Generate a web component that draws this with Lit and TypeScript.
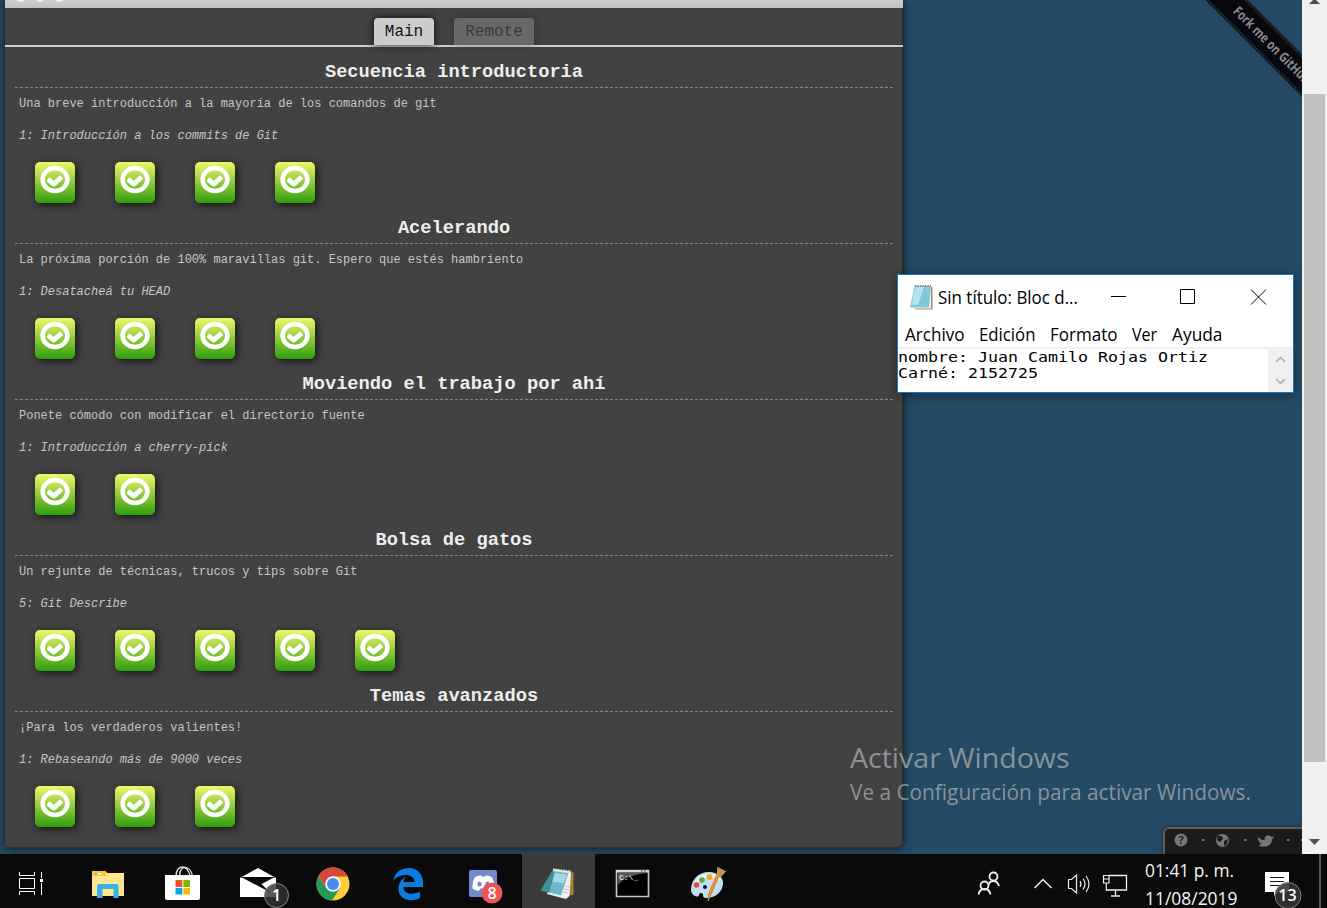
import { LitElement, html, svg, css } from "lit";
import { customElement } from "lit/decorators.js";

interface Sequence { title: string; about: string; level: string; count: number; }

const SEQUENCES: Sequence[] = [
  { title: "Secuencia introductoria", about: "Una breve introducción a la mayoría de los comandos de git", level: "1: Introducción a los commits de Git", count: 4 },
  { title: "Acelerando", about: "La próxima porción de 100% maravillas git. Espero que estés hambriento", level: "1: Desatacheá tu HEAD", count: 4 },
  { title: "Moviendo el trabajo por ahí", about: "Ponete cómodo con modificar el directorio fuente", level: "1: Introducción a cherry-pick", count: 2 },
  { title: "Bolsa de gatos", about: "Un rejunte de técnicas, trucos y tips sobre Git", level: "5: Git Describe", count: 5 },
  { title: "Temas avanzados", about: "¡Para los verdaderos valientes!", level: "1: Rebaseando más de 9000 veces", count: 3 },
];

/* One line of text stretched to an exact advance width. */
const line = (text: string, len: number, h: number, base: number, cls: string) => html`
  <svg class="line ${cls}" width=${len + 2} height=${h}><text x="0" y=${base} textLength=${len} lengthAdjust="spacingAndGlyphs">${text}</text></svg>`;

const lineCss = css`
  .line { display: block; flex: none; overflow: visible; }
  .line text { font-family: "Open Sans", "Noto Sans", sans-serif; white-space: pre; }
`;

@customElement("level-menu")
class LevelMenu extends LitElement {
  static styles = css`
    :host { display: block; width: 898px; height: 848px; background: #424242; border-radius: 0 0 5px 5px;
      box-shadow: 0 0 8px rgba(0,0,0,.75), inset -1px -1px 0 #303030; font-family: "Courier New", "Liberation Mono", monospace; overflow: visible; }
    .bar { height: 8px; background: linear-gradient(#cecece, #c2c2c2); display: flex; gap: 9px; padding-left: 11px; box-sizing: border-box; overflow: hidden; }
    .dot { width: 10px; height: 10px; margin-top: -8px; border-radius: 50%; background: #f4f4f4; }
    .tabs { height: 37px; display: flex; justify-content: center; align-items: flex-end; gap: 20px; border-bottom: 2px solid #ccc; }
    .tab { height: 27px; line-height: 29px; width: 80px; text-align: center; font-size: 16px;
      background: #686868; color: #3c3c3c; border-radius: 4px 4px 0 0; box-shadow: 0 0 9px rgba(0,0,0,.25); }
    .tab.on { width: 60px; background: #ccc; color: #111; box-shadow: 0 0 9px rgba(0,0,0,.85); }
    .body { padding: 13px 10px 0; }
    .seq { height: 156px; color: #c6c6c6; font-size: 12px; }
    h3 { margin: 0; font-size: 18.72px; line-height: 22px; padding: 1px 0 4px; text-align: center; color: #eee; border-bottom: 1px dashed #888; }
    p { margin: 0; padding-left: 4px; height: 32px; line-height: 32px; white-space: pre; }
    .name { font-style: italic; }
    .icons { display: flex; gap: 40px; padding: 10px 0 0 20px; }
    .ok { width: 40px; height: 41px; border-radius: 5px; background: linear-gradient(#f0f76a, #8cc938 52%, #2f9e0e); box-shadow: 2px 2px 8px rgba(0,0,0,.7); }
    .ok svg { display: block; }
  `;
  render() {
    return html`
      <div class="bar"><i class="dot"></i><i class="dot"></i><i class="dot"></i></div>
      <div class="tabs"><div class="tab on">Main</div><div class="tab">Remote</div></div>
      <div class="body">${SEQUENCES.map(s => html`
        <section class="seq">
          <h3>${s.title}</h3><p>${s.about}</p><p class="name">${s.level}</p>
          <div class="icons">${Array.from({ length: s.count }, () => html`
            <div class="ok"><svg width="40" height="41" fill="none" stroke="#fff">
              <ellipse cx="20" cy="17.5" rx="12.4" ry="11.5" stroke-width="4.5"/>
              <path d="M12.8 17.2l5.900 4.900 8-7" stroke-width="4.800" stroke-linejoin="round"/></svg></div>`)}
          </div>
        </section>`)}</div>`;
  }
}

@customElement("note-window")
class NoteWindow extends LitElement {
  static styles = [lineCss, css`
    :host { display: flex; flex-direction: column; box-sizing: border-box; width: 397px; height: 119px; background: #fff; border: 1px solid #1b78c0; box-shadow: 0 2px 10px rgba(0,0,0,.45); }
    .title { height: 43px; display: flex; align-items: center; flex: none; }
    .title > svg { flex: none; }
    .pad { margin: 0 4px 0 11px; }
    .ui text { font-size: 18px; fill: #000; }
    .controls { margin-left: 31px; }
    .menu { display: flex; flex: none; height: 29px; padding-left: 7px; box-sizing: border-box; gap: 12.5px; }
    .edit { display: flex; flex: 1; border-top: 2px solid #f0f0f0; }
    .text { flex: 1; }
    .mono text { font-family: "DejaVu Sans Mono", monospace; font-size: 14.5px; fill: #000; }
    .scroll { width: 25px; background: #f0f0f0; }
  `];
  render() {
    return html`
      <div class="title">
        <svg class="pad" width="25" height="28" viewBox="0 0 25 28">
          <path d="M8 4h15.500v22.500H6z" fill="#a08c62"/><path d="M6 3h16v22.500H4z" fill="#f5f5f5"/>
          <path d="M5.500 3h16.500l-2 21.500H1z" fill="#81c7d8"/><path d="M6 4h9L9 22H2.500z" fill="#b7e1ea"/>
          <path d="M6 3h16" stroke="#7a858a" stroke-width="2.200" stroke-dasharray="1.300 1.200"/>
        </svg>
        ${line("Sin título: Bloc d...", 140, 43, 28.5, "ui")}
        <svg class="controls" width="160" height="43" fill="none" stroke="#000" stroke-width="1">
          <path d="M0 21.5h15M69.5 14.5h14v14h-14zM140 14.5l15 15M155 14.5l-15 15"/></svg>
      </div>
      <div class="menu">
        ${line("Archivo", 59.5, 29, 23, "ui")}${line("Edición", 56.5, 29, 23, "ui")}${line("Formato", 67.5, 29, 23, "ui")}
        ${line("Ver", 25, 29, 23, "ui")}${line("Ayuda", 50.5, 29, 23, "ui")}
      </div>
      <div class="edit">
        <div class="text">${line("nombre: Juan Camilo Rojas Ortiz", 310, 16, 13, "mono")}${line("Carné: 2152725", 140, 16, 13, "mono")}</div>
        <svg class="scroll" width="25" height="43" fill="none" stroke="#b9b9b9" stroke-width="1.8"><path d="M8 13l4.5-4.5L17 13M8 30l4.5 4.5L17 30"/></svg>
      </div>`;
  }
}

/* Icons are drawn in screen coordinates; x is the left edge of the cell. */
const APPS = [
  { x: 0, w: 70, art: svg`<g fill="none" stroke="#fff" stroke-width="1">
      <path d="M19.5 872v3.500h15V872M19.500 878.500h15v10h-15zM19.500 895v-3.500h15v3.500M41.500 872v6M41.500 883v12"/></g><path d="M40 879h3v3h-3z" fill="#fff"/>` },
  { x: 70, w: 75, art: svg`<path d="M92 871h13l2 2h17v23H92z" fill="#ffe592"/><path d="M92 871.500q0-.500.5-.500h13l2 2-2 3H92z" fill="#fdc92d"/><path d="M95 873h6v1.500h-6z" fill="#fff"/><path d="M95 873h2v1.500h-2z" fill="#30b0a0"/>
      <path d="M97 898v-12q0-2 2-2h17.500q2 0 2 2v12h-5v-9h-11v9z" fill="#38b2e6"/>` },
  { x: 145, w: 75, art: svg`<g fill="none" stroke="#ddd" stroke-width="1.4"><path d="M176 876c0-12 12-12 14 0M179.500 876c0-12 11-11 13 0"/></g>
      <path d="M165 875h35v23q0 2-2 2h-31q-2 0-2-2z" fill="#fff"/><path d="M175.500 880h6.800v7h-6.800z" fill="#f25022"/><path d="M183.300 880h6.700v7h-6.700z" fill="#7fba00"/>
      <path d="M175.500 888h6.800v6.500h-6.800z" fill="#00a4ef"/><path d="M183.300 888h6.700v6.500h-6.700z" fill="#ffb900"/>` },
  { x: 220, w: 75, art: svg`<path d="M240 878l18-10 18 10v19h-36z" fill="#fff"/><path d="M241 877h34l-13.500 7 8 8z" fill="#0b0b0b"/>
      <circle cx="276.500" cy="895.500" r="12" fill="#333" fill-opacity=".82" stroke="#888"/><text class="badge" x="276.500" y="901" text-anchor="middle">1</text>` },
  { x: 295, w: 75, art: svg`<circle cx="333" cy="884" r="16.500" fill="#fdcb3e"/>
      <path d="M318.700 875.750A16.500 16.500 0 0 0 332 900.500L340 888 333 884 326 888z" fill="#249a59"/><path d="M318.700 875.750L326 888l7-11.500h14.700a16.500 16.500 0 0 0-29-.75z" fill="#d8473b"/><circle cx="333" cy="884" r="7.800" fill="#f5f5f5"/><circle cx="333" cy="884" r="6" fill="#4a8af0"/>` },
  { x: 370, w: 75, art: svg`<path d="M393 881C395 873 400 868 409 868c9 0 14 7 14 14v5h-19.500c.5 8 9 8 16.500 4.500v6.500c-10 5-21.500 1.500-21.500-9 0-6 3-10 7.500-12.500-1.500 1.500-2.300 3.500-2.500 5.500h11c0-9-15-9-21.500-1z" fill="#0b7bdc"/>` },
  { x: 445, w: 75, art: svg`<rect x="469" y="870" width="28" height="27" rx="2" fill="#7489cd"/><path d="M475 877q3-2 6-1.500l1 1h3l1-1q4 0 6 2 3 5 2.500 11-3 2.500-6 2.500l-2-2.500h-6l-2 2.500q-3-.5-6-2.500-.5-6 2.500-11.500z" fill="#fff"/>
      <ellipse cx="479.500" cy="884" rx="2.200" ry="2.500" fill="#7489cd"/><ellipse cx="487.500" cy="884" rx="2.200" ry="2.500" fill="#7489cd"/>
      <circle cx="492" cy="893" r="10.500" fill="#ee5555"/><text class="badge" x="492" y="899" text-anchor="middle">8</text>` },
  { x: 520, w: 75, active: true, art: svg`<path d="M566 871.500l7.500 1v22l-4 1z" fill="#a98235"/><path d="M554 869l17 2.500-1.500 24.500-3.500 3-19-5z" fill="#eef2f3"/><path d="M553 871l15.500 2-7.500 22.500-20-5z" fill="#6db7c9"/><path d="M552 871l-11.500 19.500 9 2 5-21z" fill="#438c99"/><path d="M555 873l12 1.500-3.500 9-11-2z" fill="#a2d8e2"/>
      <path d="M553 869.800l18 2" stroke="#d8d8d8" stroke-width="3" stroke-dasharray="1.500 1"/><path d="M565 886l5 1M564 889l5 1M563 892l5 1" stroke="#a9b3b6" stroke-width=".8"/>` },
  { x: 595, w: 75, art: svg`<path d="M616.500 870.500h32v26h-32z" fill="#000" stroke="#c6c6ce" stroke-width="1.600"/><path d="M616 870h33v2.500h-33z" fill="#d5d5df"/><path d="M618 873h29c-12 1-24 5-29 12z" fill="#555"/><path d="M641 871h1.500M644 871h1.500" stroke="#334"/>
      <text class="cmd" x="619" y="880">C:\\_</text>` },
  { x: 670, w: 75, art: svg`<path d="M691 890c0-10 7-18 18-18 9 0 14 5 14 11 0 9-8 15-17 15-5 0-1-5-5-5-3 0-1 4-4 3.500-3 0-6-3-6-6.500z" fill="#bfe0f4"/><path d="M693 886c2-8 9-12.500 17-12.500 6 0 9 3 10 7-8-5-19-3-27 5.500z" fill="#e5f5fe"/>
      <circle cx="696.500" cy="885" r="2.800" fill="#e4493c"/><circle cx="702" cy="880" r="2.800" fill="#55b33c"/><circle cx="709.500" cy="877" r="3" fill="#f3ac25"/><circle cx="705" cy="887" r="2" fill="#111"/>
      <path d="M719 876l-11 25 1-8 8-19z" fill="#f39a2c" stroke="#d87a20"/><path d="M718 868l7 3.500-4.500 5-3-2z" fill="#c39258" stroke="#c39258" stroke-width="1.500"/>` },
];

@customElement("task-bar")
class TaskBar extends LitElement {
  static styles = [lineCss, css`
    :host { display: flex; height: 54px; background: #0a0a0a; }
    .cell { display: block; flex: none; overflow: visible; }
    .active { background: linear-gradient(90deg, transparent 2px, #3b3b3b 2px); }
    .apps { display: flex; width: 960px; flex: none; }
    .badge { font: 600 16px "Open Sans", sans-serif; fill: #fff; }
    .cmd { font: bold 8px "Liberation Mono", monospace; fill: #ddd; }
    .clock { width: 105px; flex: none; padding: 4px 0 0 3.5px; box-sizing: border-box; }
    .time text { font-size: 17.5px; fill: #f5f5f5; }
  `];
  render() {
    return html`
      <div class="apps">${APPS.map(a => html`<svg class="cell ${a.active ? "active" : ""}" width=${a.w} height="54" viewBox="${a.x} 854 ${a.w} 54">${a.art}</svg>`)}</div>
      <svg class="cell" width="181" height="54" viewBox="960 854 181 54" fill="none" stroke="#eee" stroke-width="1.5">
        <g stroke-width="1.8"><circle cx="993.500" cy="876.500" r="4"/><path d="M988.500 885q1-4 5-4t5.500 5"/><circle cx="984.500" cy="885.500" r="4"/><path d="M978.500 894.500q1-5.500 6-5.500t6 5.500"/></g>
        <path d="M1034.500 888l8.500-8.500 8.500 8.500"/>
        <path d="M1068.500 879.500h3l5-4.500v18l-5-4.500h-3z" stroke-width="1.200"/><path d="M1080 881q2 3 0 6M1083 878.500q4 5.500 0 11M1086 876q6 8 0 16" stroke-width="1.200"/>
        <path d="M1109 875.500h17.500v14.500H1106M1115.500 890v6M1111 896h9" stroke-width="1.300"/><path d="M1103.500 875.500h5.500v7.500h-5.500zM1106.300 883v8" stroke-width="1.200"/><path d="M1103.500 879h5.500" stroke-width="1"/>
      </svg>
      <div class="clock">${line("01:41 p. m.", 89, 27, 19, "time")}${line("11/08/2019", 92.5, 23, 19.5, "time")}</div>
      <svg class="cell" width="81" height="54" viewBox="1246 854 81 54">
        <path d="M1265 872h24v20h-11l-4 4v-4h-9z" fill="#fff"/><path d="M1270 877.500h14M1270 881.500h14M1270 885.500h10" stroke="#111" stroke-width="1.100"/>
        <circle cx="1288" cy="895.500" r="13" fill="#333" fill-opacity=".88" stroke="#888"/><text class="badge" x="1287.500" y="901" text-anchor="middle">13</text>
        <path d="M1320 854v54" stroke="#707070" stroke-width="1.500"/>
      </svg>`;
  }
}

@customElement("app-root")
class AppRoot extends LitElement {
  static styles = [lineCss, css`
    :host { display: flex; flex-direction: column; width: 1327px; height: 908px; overflow: hidden; }
    .desk { display: flex; height: 854px; flex: none; }
    .page { position: relative; width: 1302px; background: #254b64; padding-left: 5px; box-sizing: border-box; overflow: hidden; }
    .bar { width: 25px; display: flex; flex-direction: column; align-items: center; background: #f0f0f0; }
    .thumb { width: 21px; height: 668px; background: #c0c0c0; }
    .arrow { display: block; }
    .ribbon { position: absolute; right: 0; top: 0; }
    .fork { font: 700 13.5px "Open Sans", sans-serif; fill: #8a8a8c; }
    .dock { position: absolute; right: -6px; bottom: -6px; width: 145px; height: 33px; box-sizing: border-box; background: #1b1b1b; border: 2px solid #5c5c5c; border-radius: 6px 0 0 0; box-shadow: 0 0 5px rgba(0,0,0,.4); }
    .mark { position: absolute; left: 850px; top: 738px; }
    .big text { font-size: 28px; fill: #9a9da0; fill-opacity: .88; }
    .small text { font-size: 21px; fill: #9a9da0; fill-opacity: .88; }
    .note { position: absolute; left: 897px; top: 274px; }
    .q { font: bold 11px "Open Sans", sans-serif; fill: #1b1b1b; }
  `];
  render() {
    return html`
      <div class="desk">
        <main class="page">
          <level-menu></level-menu>
          <svg class="ribbon" width="122" height="122">
            <g transform="translate(46.5 0) rotate(45)">
              <path d="M-40 -16h240v32h-240z" fill="#000" fill-opacity=".14"/>
              <path d="M-40 -14.500h240v29h-240z" fill="#08090e"/>
              <path d="M-40 -13h240M-40 13h240" stroke="#444" stroke-width="1" stroke-dasharray="1.500 1"/>
              <text class="fork" x="12.500" y="4.500" textLength="103" lengthAdjust="spacingAndGlyphs">Fork me on GitHub</text>
            </g>
          </svg>
          <div class="dock"><svg width="139" height="27" fill="#777">
            <circle cx="16" cy="11" r="6.500"/><text class="q" x="16" y="15" text-anchor="middle">?</text>
            <circle cx="57.500" cy="11.500" r="6.500"/><path d="M53 7l4 0 1 3-3 3-3-2zM59 12l4-2-1 5-3 2z" fill="#1b1b1b"/>
            <path d="M93 8c3 3 5 3 6.500 3 0-5 4-6 7-3l2.500-.5-2 3c0 6-7 9-13.500 6l3-1.500c-2-1-2-1.500-2.500-3-1-1-1.500-2-1-4z"/>
            <path d="M37 10h2.500v2H37zM79 10h2.500v2H79zM122 10h2.500v2H122zM136 10h3v2h-3z"/>
          </svg></div>
          <div class="mark">${line("Activar Windows", 219.5, 37, 30, "big")}${line("Ve a Configuración para activar Windows.", 401, 35, 25, "small")}</div>
          <note-window class="note"></note-window>
        </main>
        <div class="bar">
          <svg class="arrow" width="25" height="94"><path d="M7 4l4-4h3l4 4z" fill="#505050"/></svg>
          <div class="thumb"></div>
          <svg class="arrow" width="25" height="92"><path d="M7 77h11l-5.500 6z" fill="#505050"/></svg>
        </div>
      </div>
      <task-bar></task-bar>`;
  }
}
